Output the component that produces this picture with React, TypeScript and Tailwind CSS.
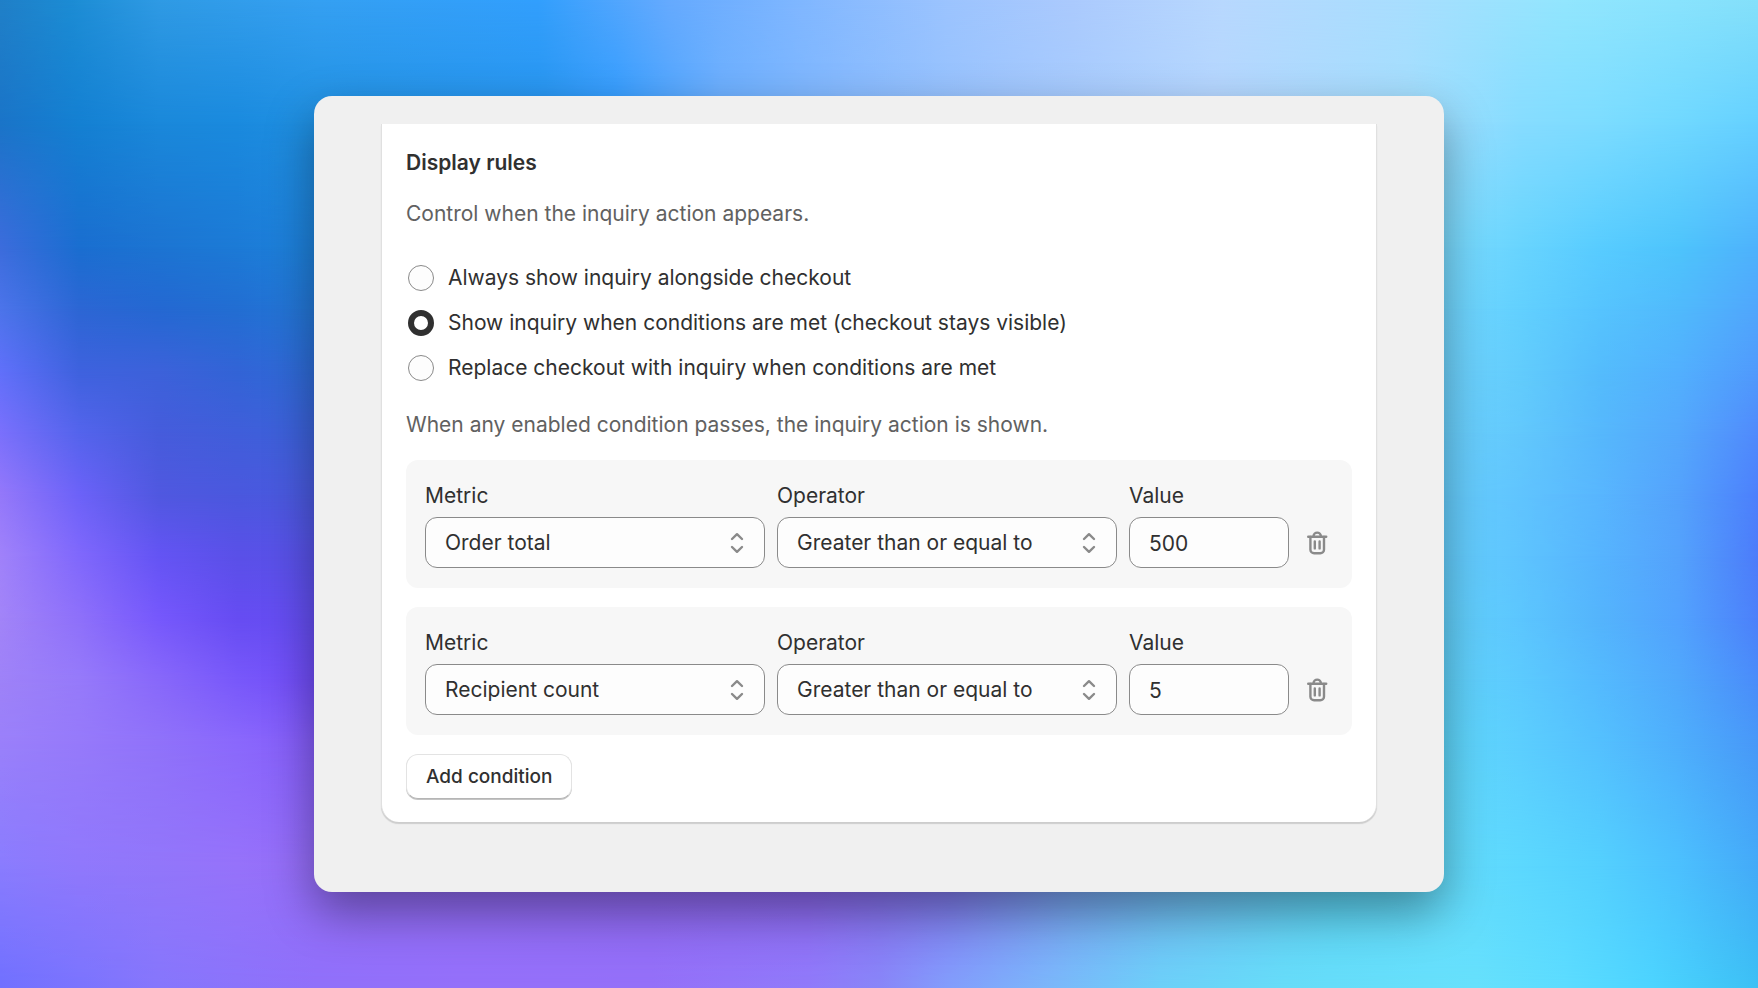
import { useId, useState } from "react";

type BackdropRow = { y: number; stops: [number, string][] };

// colour rows of the backdrop, top to bottom; y and each stop's x are in %
const backdropRows: BackdropRow[] = [
  {
    y: 0,
    stops: [
      [0, "#2080c8"], [4, "#1c8cd4"], [9, "#2f9ae4"], [18, "#35a0f2"], [30.6, "#329ffd"],
      [38, "#65aafe"], [45, "#7eb6ff"], [54, "#9cc4fe"], [61, "#abcafd"], [69.5, "#b8d8fe"],
      [80, "#a8defe"], [89, "#92e6fe"], [95.5, "#89e3fd"], [100, "#84e0fa"],
    ],
  },
  {
    y: 12.5,
    stops: [
      [0, "#1a74c8"], [4.5, "#1480d2"], [9, "#1a88da"], [13.5, "#1a8ade"], [18, "#2090e2"],
      [31, "#2694ee"], [35, "#309cff"], [41, "#6cb0ff"], [48, "#86baff"], [57, "#9ec6fe"],
      [69, "#b4d6ff"], [80, "#a4defe"], [86.5, "#86dcff"], [91, "#7cdcff"], [95.5, "#70d8ff"], [100, "#64d0ff"],
    ],
  },
  {
    y: 25,
    stops: [
      [0, "#3c6cdc"], [4.5, "#1a6ed0"], [9, "#1c74d2"], [13.5, "#1c7ad6"], [18, "#1e82dc"],
      [82, "#7cdcff"], [86.5, "#68d4fe"], [91, "#58ccff"], [95.5, "#4ec4fc"], [100, "#4eb2fc"],
    ],
  },
  {
    y: 31.25,
    stops: [
      [0, "#4c74ea"], [4.5, "#2c66d4"], [9, "#2468d2"], [13.5, "#226ed2"], [18, "#2478d8"],
      [82, "#74d8ff"], [86.5, "#62d0fe"], [91, "#56c4fe"], [95.5, "#50bafc"], [100, "#50a6fc"],
    ],
  },
  {
    y: 37.5,
    stops: [
      [0, "#6070fa"], [4.5, "#3e62de"], [9, "#3c62da"], [13.5, "#3264d6"], [18, "#2e6cd8"],
      [82, "#70d4fe"], [86.5, "#62ccfc"], [91, "#54bcfc"], [95.5, "#52b0fe"], [100, "#509afc"],
    ],
  },
  {
    y: 43.75,
    stops: [
      [0, "#7a70fc"], [4.5, "#5464ec"], [9, "#465cdc"], [13.5, "#405eda"], [18, "#3c62da"],
      [82, "#6cd2fe"], [86.5, "#62c8fc"], [91, "#56b8fc"], [95.5, "#54a8fc"], [100, "#508afc"],
    ],
  },
  {
    y: 50,
    stops: [
      [0, "#9478fa"], [4.5, "#6c62f8"], [9, "#5058e0"], [13.5, "#4a58de"], [18, "#4a5ae0"],
      [82, "#68d0fe"], [86.5, "#60c4fe"], [91, "#58b6fe"], [95.5, "#54a2fc"], [100, "#4c80fc"],
    ],
  },
  {
    y: 56.25,
    stops: [
      [0, "#a082fa"], [4.5, "#8068fc"], [9, "#6454f4"], [13.5, "#5a50e8"], [18, "#5852e8"],
      [82, "#66d0fe"], [86.5, "#5ec4fe"], [91, "#56b4fe"], [95.5, "#54a2fc"], [100, "#4c7cfa"],
    ],
  },
  {
    y: 62.5,
    stops: [
      [0, "#a284f8"], [4.5, "#8e70fa"], [9, "#7658fc"], [13.5, "#664cf2"], [18, "#644ef2"],
      [82, "#64d2fc"], [86.5, "#5cc6fe"], [91, "#54b4fc"], [95.5, "#52a2fe"], [100, "#4c80fa"],
    ],
  },
  {
    y: 68.75,
    stops: [
      [0, "#9e82f8"], [4.5, "#967afa"], [9, "#8868fa"], [13.5, "#7858fa"], [18, "#704cf8"],
      [82, "#62d4fc"], [86.5, "#5ccafe"], [91, "#54bafe"], [95.5, "#50a8fc"], [100, "#4a8cfa"],
    ],
  },
  {
    y: 75,
    stops: [
      [0, "#9a80fa"], [4.5, "#967afa"], [9, "#9072fa"], [13.5, "#8a68fc"], [18, "#845cfa"],
      [82, "#60d8fc"], [86.5, "#5ccefe"], [91, "#54c0fe"], [95.5, "#4eaefc"], [100, "#4898f8"],
    ],
  },
  {
    y: 87.5,
    stops: [
      [0, "#8a7cfe"], [4.5, "#9078fc"], [9, "#9276fa"], [13.5, "#9672fa"], [18, "#946cf8"],
      [46, "#8e66f2"], [54, "#8274f0"], [61, "#78a0f2"], [68, "#70bcf4"], [76, "#5cd4f6"],
      [82, "#64dcfc"], [86.5, "#5cd8fe"], [91, "#54d0fe"], [95.5, "#4cc0fe"], [100, "#44aaf8"],
    ],
  },
  {
    y: 100,
    stops: [
      [0, "#7070ff"], [4.5, "#7a74fe"], [9, "#8676fc"], [18, "#9070fa"], [26, "#9470fa"],
      [37, "#9470f8"], [46, "#907afa"], [50, "#8886f8"], [54, "#829efc"], [60, "#7ab8fa"],
      [66, "#6cd0f8"], [73, "#66dcf8"], [84, "#66e0fc"], [89, "#5cdcff"], [94, "#4cd4ff"], [100, "#3cc0f4"],
    ],
  },
];

const Backdrop = () => (
  <div aria-hidden="true" className="absolute inset-0">
    {backdropRows.map(({ y, stops }, i) => (
      <div
        key={y}
        className="absolute inset-0"
        style={{
          backgroundImage: `linear-gradient(to right, ${stops
            .map(([x, color]) => `${color} ${x}%`)
            .join(", ")})`,
          maskImage:
            i === 0
              ? undefined
              : `linear-gradient(to bottom, transparent ${backdropRows[i - 1].y}%, black ${y}%)`,
        }}
      />
    ))}
  </div>
);

const TrashIcon = () => (
  <svg
    className="size-8"
    viewBox="0 0 32 32"
    fill="none"
    stroke="currentColor"
    strokeWidth="2.4"
    strokeLinecap="round"
    strokeLinejoin="round"
  >
    <path d="M7.2 9.7h18" />
    <path d="M12.6 9.2v-.4a3.6 3.2 0 0 1 7.2 0v.4" />
    <path d="M9.4 10v12.6a3.7 3.7 0 0 0 3.7 3.7h6.2a3.7 3.7 0 0 0 3.7-3.7V10" />
    <path d="M13.8 14.4v7M18.6 14.4v7" />
  </svg>
);

const SelectIcon = () => (
  <svg
    className="pointer-events-none absolute top-1/2 right-4 size-6 -translate-y-1/2 text-[#8a8a8a]"
    viewBox="0 0 24 24"
    fill="none"
    stroke="currentColor"
    strokeWidth="2.4"
    strokeLinecap="round"
    strokeLinejoin="round"
  >
    <path d="M7 8 12 3.2 17 8" />
    <path d="M7 16 12 20.8 17 16" />
  </svg>
);

const fieldClass =
  "h-[51px] w-full appearance-none rounded-xl border border-[#8a8a8a] bg-[#fdfdfd] px-[19px] pt-px text-[#303030]";

type SelectFieldProps = {
  label: string;
  value: string;
  options: string[];
  onChange: (value: string) => void;
};

const SelectField = ({ label, value, options, onChange }: SelectFieldProps) => {
  const id = useId();
  return (
    <div className="flex min-w-0 flex-col gap-[5px]">
      <label htmlFor={id}>{label}</label>
      <div className="relative">
        <select
          id={id}
          className={fieldClass}
          value={value}
          onChange={(e) => onChange(e.target.value)}
        >
          {options.map((option) => (
            <option key={option}>{option}</option>
          ))}
        </select>
        <SelectIcon />
      </div>
    </div>
  );
};

type Condition = { id: number; metric: string; operator: string; value: string };

const metrics = ["Order total", "Recipient count"];
const operators = ["Greater than or equal to", "Less than or equal to"];

type ConditionRowProps = {
  condition: Condition;
  onChange: (patch: Partial<Condition>) => void;
  onRemove: () => void;
};

const ConditionRow = ({ condition, onChange, onRemove }: ConditionRowProps) => {
  const id = useId();
  return (
    <div className="grid grid-cols-[1fr_1fr_160px_32px] items-end gap-3 rounded-xl bg-[#f7f7f7] px-[19px] py-5">
      <SelectField
        label="Metric"
        value={condition.metric}
        options={metrics}
        onChange={(metric) => onChange({ metric })}
      />
      <SelectField
        label="Operator"
        value={condition.operator}
        options={operators}
        onChange={(operator) => onChange({ operator })}
      />
      <div className="flex flex-col gap-[5px]">
        <label htmlFor={id}>Value</label>
        <input
          id={id}
          type="text"
          inputMode="numeric"
          className={fieldClass}
          value={condition.value}
          onChange={(e) => onChange({ value: e.target.value })}
        />
      </div>
      <button
        type="button"
        aria-label="Remove condition"
        className="flex h-[51px] items-center justify-center text-[#8a8a8a]"
        onClick={onRemove}
      >
        <TrashIcon />
      </button>
    </div>
  );
};

const modes = [
  { value: "always", label: "Always show inquiry alongside checkout" },
  { value: "show", label: "Show inquiry when conditions are met (checkout stays visible)" },
  { value: "replace", label: "Replace checkout with inquiry when conditions are met" },
];

export default function App() {
  const [mode, setMode] = useState("show");
  const [conditions, setConditions] = useState<Condition[]>([
    { id: 1, metric: metrics[0], operator: operators[0], value: "500" },
    { id: 2, metric: metrics[1], operator: operators[0], value: "5" },
  ]);

  const update = (id: number, patch: Partial<Condition>) =>
    setConditions((list) => list.map((c) => (c.id === id ? { ...c, ...patch } : c)));

  const add = () =>
    setConditions((list) => [
      ...list,
      { id: Date.now(), metric: metrics[0], operator: operators[0], value: "" },
    ]);

  return (
    <main className="relative flex min-h-screen items-center justify-center overflow-hidden p-6 font-['Inter',sans-serif] text-[21px] leading-8 text-[#303030]">
      <Backdrop />
      <div className="relative w-full max-w-[1130px] rounded-[18px] bg-[#f0f0f0] px-[67px] pt-7 pb-[70px] shadow-[0_20px_48px_rgba(0,0,0,0.38)]">
        <section className="rounded-b-[18px] border-x border-[#e0e0e0] bg-white px-6 pt-[23px] pb-[23px] shadow-[0_2px_1px_rgba(26,26,26,0.16)]">
          <h2 id="rules-title" className="font-semibold">
            Display rules
          </h2>
          <p className="mt-[19px] text-[#616161]">Control when the inquiry action appears.</p>

          <fieldset aria-labelledby="rules-title" className="mt-8 flex flex-col gap-[13px]">
            {modes.map(({ value, label }) => (
              <label key={value} className="flex items-center gap-[14px] pl-[2px]">
                <input
                  type="radio"
                  name="mode"
                  value={value}
                  checked={mode === value}
                  onChange={() => setMode(value)}
                  className="size-[26px] shrink-0 appearance-none rounded-full border border-[#8a8a8a] bg-[#fdfdfd] checked:border-[6px] checked:border-[#303030] checked:bg-white"
                />
                {label}
              </label>
            ))}
          </fieldset>

          <p className="mt-[25px] text-[#616161]">
            When any enabled condition passes, the inquiry action is shown.
          </p>

          <div className="mt-[19px] flex flex-col items-stretch gap-[19px]">
            {conditions.map((condition) => (
              <ConditionRow
                key={condition.id}
                condition={condition}
                onChange={(patch) => update(condition.id, patch)}
                onRemove={() => setConditions((list) => list.filter((c) => c.id !== condition.id))}
              />
            ))}
            <button
              type="button"
              onClick={add}
              className="h-[45px] self-start rounded-xl border border-[#e3e3e3] border-b-[#b5b5b5] bg-white px-[19px] text-[19px] font-medium shadow-[0_1px_0_#c4c4c4]"
            >
              Add condition
            </button>
          </div>
        </section>
      </div>
    </main>
  );
}
